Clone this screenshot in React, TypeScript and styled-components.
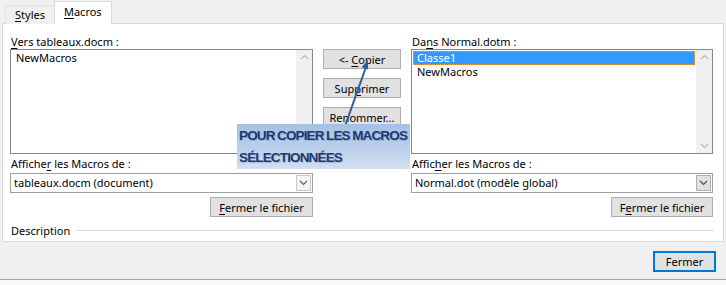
import React from "react";
import styled, { createGlobalStyle } from "styled-components";

const Global = createGlobalStyle`
  html, body { margin: 0; padding: 0; }
  body {
    background: #f0f0f0;
    font-family: "Noto Sans", "Open Sans", Arial, sans-serif;
    font-size: 11px;
    color: #000;
  }
`;

const Dialog = styled.div`
  width: 726px;
  height: 285px;
  display: flex;
  flex-direction: column;
  background: #f0f0f0;
  overflow: hidden;
`;

const TabBar = styled.div`
  height: 24px;
  display: flex;
  align-items: flex-end;
  padding-left: 5px;
  position: relative;
  z-index: 2;
`;

const Tab = styled.div<{ $active?: boolean }>`
  box-sizing: border-box;
  height: ${(p) => (p.$active ? 23 : 19)}px;
  padding: 0 9px;
  line-height: ${(p) => (p.$active ? 20 : 18)}px;
  background: ${(p) => (p.$active ? "#fff" : "#f0f0f0")};
  border: 1px solid ${(p) => (p.$active ? "#d9d9d9" : "#e3e3e3")};
  border-bottom: none;
  ${(p) => (p.$active ? "" : "border-right: none;")}
`;

const Panel = styled.div`
  position: relative;
  margin: -1px 2px 0 2px;
  height: 219px;
  box-sizing: border-box;
  border: 1px solid #d9d9d9;
  background: #fff;
  padding: 10px 9px 0 7px;
  display: flex;
  flex-direction: column;
`;

const Columns = styled.div`
  display: grid;
  grid-template-columns: 303px 78px 302px;
  column-gap: 10px;
`;

const Column = styled.div`
  display: flex;
  flex-direction: column;
`;

const Label = styled.div<{ $h?: number }>`
  height: ${(p) => p.$h ?? 15}px;
  line-height: ${(p) => p.$h ?? 15}px;
  padding-left: 1px;
  white-space: nowrap;
`;

const U = styled.span`
  text-decoration: underline;
  text-underline-offset: 2px;
`;

const ListBox = styled.div`
  height: 105px;
  box-sizing: border-box;
  border: 1px solid #828790;
  display: flex;
`;

const ListItems = styled.div`
  flex: 1;
  padding: 1px 1px 0 1px;
  display: flex;
  flex-direction: column;
`;

const Item = styled.div<{ $selected?: boolean }>`
  height: 14px;
  line-height: 12px;
  padding-left: 3px;
  box-sizing: border-box;
  color: ${(p) => (p.$selected ? "#fff" : "#000")};
  background: ${(p) => (p.$selected ? "#3399ff" : "transparent")};
  border: 1px ${(p) => (p.$selected ? "dotted #f0a040" : "solid transparent")};
`;

const ScrollBar = styled.div`
  width: 16px;
  background: #f0f0f0;
  display: flex;
  flex-direction: column;
  justify-content: space-between;
  align-items: center;
  padding: 4px 0;
`;

const Chevron = ({ up, color = "#b8b8b8" }: { up?: boolean; color?: string }) => (
  <svg width="9" height="6" viewBox="0 0 9 6">
    <path
      d={up ? "M1 5 L4.5 1.5 L8 5" : "M1 1 L4.5 4.5 L8 1"}
      stroke={color}
      strokeWidth="1.2"
      fill="none"
    />
  </svg>
);

const Combo = styled.div`
  height: 20px;
  box-sizing: border-box;
  border: 1px solid #a0a0a0;
  display: flex;
  align-items: stretch;
`;

const ComboText = styled.div`
  flex: 1;
  line-height: 18px;
  padding-left: 3px;
`;

const ComboButton = styled.div<{ $hot?: boolean }>`
  width: 15px;
  margin: 1px;
  box-sizing: border-box;
  border: 1px solid ${(p) => (p.$hot ? "#b0b0b0" : "#c8c8c8")};
  background: ${(p) => (p.$hot ? "#e2e2e2" : "#f4f4f4")};
  display: flex;
  align-items: center;
  justify-content: center;
`;

const ButtonRow = styled.div`
  display: flex;
  justify-content: flex-end;
  margin-top: 4px;
`;

const Button = styled.div<{ $w?: number; $default?: boolean }>`
  width: ${(p) => p.$w ?? 78}px;
  height: ${(p) => (p.$default ? 21 : 20)}px;
  box-sizing: border-box;
  background: #e1e1e1;
  border: ${(p) => (p.$default ? "2px solid #0078d7" : "1px solid #adadad")};
  display: flex;
  align-items: center;
  justify-content: center;
  white-space: pre;
`;

const MiddleStack = styled.div`
  display: flex;
  flex-direction: column;
  gap: 9px;
  padding-top: 15px;
`;

const DescriptionRow = styled.div`
  display: flex;
  align-items: center;
  gap: 6px;
  margin-top: 6px;
  height: 14px;
  padding-left: 1px;
`;

const Rule = styled.div`
  flex: 1;
  height: 1px;
  background: #dcdcdc;
`;

const Callout = styled.div`
  position: absolute;
  left: 234px;
  top: 100px;
  width: 173px;
  height: 45px;
  box-sizing: border-box;
  padding: 1px 0 0 2px;
  background: linear-gradient(#a5c0e6, #bcd0ec 55%, #d3dff1);
  color: #1a3a70;
  font-family: "Liberation Sans", Arial, sans-serif;
  font-weight: bold;
  font-size: 13.5px;
  letter-spacing: -0.85px;
  word-spacing: -0.5px;
  line-height: 22px;
  white-space: nowrap;
  text-shadow: 1px 1px 0 rgba(80, 90, 120, 0.25);
  z-index: 3;
`;

const ArrowSvg = styled.svg`
  position: absolute;
  left: 332px;
  top: 31px;
  z-index: 2;
`;

const Footer = styled.div`
  height: 38px;
  display: flex;
  justify-content: flex-end;
  align-items: flex-start;
  padding: 9px 10px 0 0;
  box-sizing: border-box;
  border-bottom: 1px solid #5db6ee;
`;

const Bottom = styled.div`
  flex: 1;
  background: #f9f9f9;
`;

export default function App() {
  return (
    <Dialog>
      <Global />
      <TabBar>
        <Tab>
          <U>S</U>tyles
        </Tab>
        <Tab $active>
          <U>M</U>acros
        </Tab>
      </TabBar>
      <Panel>
        <Columns>
          <Column>
            <Label>
              <U>V</U>ers tableaux.docm :
            </Label>
            <ListBox>
              <ListItems>
                <Item>NewMacros</Item>
              </ListItems>
              <ScrollBar>
                <Chevron up />
                <Chevron />
              </ScrollBar>
            </ListBox>
            <Label $h={19}>
              Affiche<U>r</U> les Macros de :
            </Label>
            <Combo>
              <ComboText>tableaux.docm (document)</ComboText>
              <ComboButton>
                <Chevron color="#606060" />
              </ComboButton>
            </Combo>
            <ButtonRow>
              <Button $w={103}>
                <U>F</U>ermer le fichier
              </Button>
            </ButtonRow>
          </Column>
          <MiddleStack>
            <Button>
              {"<- "}
              <U>C</U>opier
            </Button>
            <Button>
              Sup<U>p</U>rimer
            </Button>
            <Button>
              Re<U>n</U>ommer...
            </Button>
          </MiddleStack>
          <Column>
            <Label>
              Da<U>n</U>s Normal.dotm :
            </Label>
            <ListBox>
              <ListItems>
                <Item $selected>Classe1</Item>
                <Item>NewMacros</Item>
              </ListItems>
              <ScrollBar>
                <Chevron up />
                <Chevron />
              </ScrollBar>
            </ListBox>
            <Label $h={19}>
              Affic<U>h</U>er les Macros de :
            </Label>
            <Combo>
              <ComboText>Normal.dot (modèle global)</ComboText>
              <ComboButton $hot>
                <Chevron color="#505050" />
              </ComboButton>
            </Combo>
            <ButtonRow>
              <Button $w={102}>
                F<U>e</U>rmer le fichier
              </Button>
            </ButtonRow>
          </Column>
        </Columns>
        <DescriptionRow>
          Description
          <Rule />
        </DescriptionRow>
        <ArrowSvg width="40" height="75" viewBox="0 0 40 75">
          <line x1="9" y1="74" x2="31" y2="12" stroke="#2e5c9a" strokeWidth="2" />
          <polygon points="33,5 33.1,14.6 26.6,12.2" fill="#2e5c9a" />
        </ArrowSvg>
        <Callout>
          POUR COPIER LES MACROS
          <br />
          SÉLECTIONNÉES
        </Callout>
      </Panel>
      <Footer>
        <Button $w={63} $default>
          Fermer
        </Button>
      </Footer>
      <Bottom />
    </Dialog>
  );
}
